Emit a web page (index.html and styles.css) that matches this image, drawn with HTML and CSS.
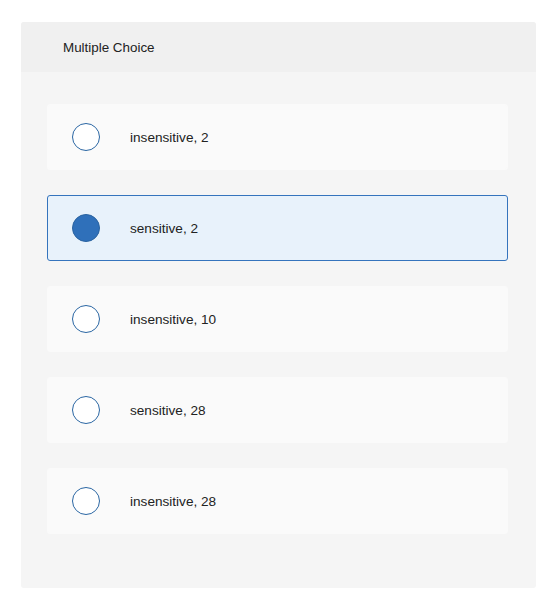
FILE: index.html
```html
<!DOCTYPE html>
<html>
<head>
<meta charset="utf-8">
<link rel="stylesheet" href="styles.css">
</head>
<body>
<div class="panel">
  <div class="panel-header">Multiple Choice</div>
  <div class="panel-body">
    <div class="option"><span class="radio"></span><span class="label">insensitive, 2</span></div>
    <div class="option selected"><span class="radio"></span><span class="label">sensitive, 2</span></div>
    <div class="option"><span class="radio"></span><span class="label">insensitive, 10</span></div>
    <div class="option"><span class="radio"></span><span class="label">sensitive, 28</span></div>
    <div class="option"><span class="radio"></span><span class="label">insensitive, 28</span></div>
  </div>
</div>
</body>
</html>
```
FILE: styles.css
```css
html, body {
  margin: 0;
  padding: 0;
  background: #ffffff;
}
body {
  font-family: "Liberation Sans", Arial, sans-serif;
  color: #222222;
  padding: 22px 21px 0 21px;
}
.panel {
  width: 515px;
  background: #f5f5f5;
  border-radius: 3px;
  overflow: hidden;
}
.panel-header {
  height: 50px;
  background: #f0f0f0;
  box-sizing: border-box;
  padding: 18px 0 0 42px;
  font-size: 13.4px;
  line-height: 16px;
}
.panel-body {
  padding: 32px 28px 54px 26px;
  display: flex;
  flex-direction: column;
  gap: 25px;
}
.option {
  height: 66px;
  box-sizing: border-box;
  background: #fafafa;
  border: 1px solid #fafafa;
  border-radius: 3px;
  display: flex;
  align-items: center;
  padding-left: 24px;
}
.option.selected {
  background: #e8f2fb;
  border-color: #3574bd;
}
.radio {
  width: 28px;
  height: 28px;
  box-sizing: border-box;
  border: 1.3px solid #2a66a3;
  border-radius: 50%;
  background: #ffffff;
  flex: none;
}
.selected .radio {
  background: #2f70ba;
  border-color: #2a63a0;
}
.label {
  margin-left: 30px;
  font-size: 13.6px;
  line-height: 16px;
  padding-top: 2px;
}
```
